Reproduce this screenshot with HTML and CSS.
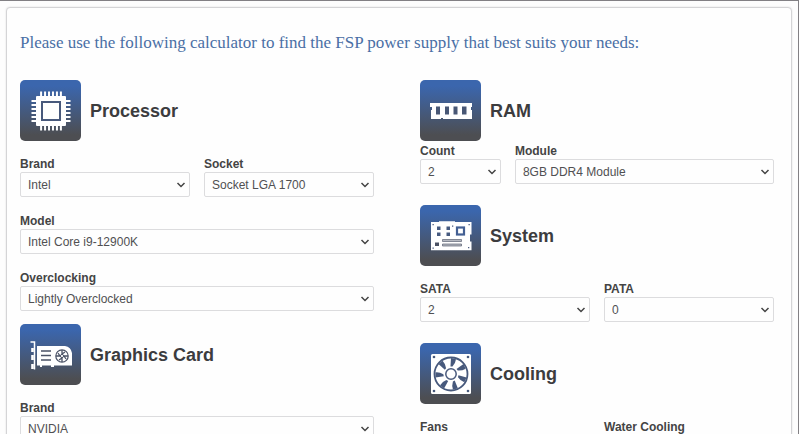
FILE: index.html
```html
<!DOCTYPE html>
<html lang="en">
<head>
    <meta charset="UTF-8">
    <meta name="viewport" content="width=device-width, initial-scale=1.0">
    <title>Power Supply Calculator</title>
    <link rel="stylesheet" href="styles.css">
</head>
<body>
    <!-- Gradient shared by all section icons -->
    <svg class="defs" width="0" height="0" aria-hidden="true">
        <linearGradient id="tile" x1="0" y1="0" x2="0" y2="1">
            <stop offset="0.1" stop-color="#3b66ad"/>
            <stop offset="0.9" stop-color="#4d4e52"/>
        </linearGradient>
    </svg>

    <main class="calculator">
        <p class="intro">Please use the following calculator to find the FSP power supply that best suits your needs:</p>

        <form class="columns">
            <div class="column">
                <section>
                    <div class="section-title">
                        <svg class="icon" viewBox="0 0 61 61" aria-hidden="true">
                            <rect width="61" height="61" rx="5" fill="url(#tile)"/>
                            <path d="M20.100 14h22M20.100 48h22" stroke="#fff" stroke-width="5" stroke-dasharray="2 1.960"/>
                            <path d="M14 20.100v22M48 20.100v22" stroke="#fff" stroke-width="5" stroke-dasharray="2 1.960"/>
                            <rect x="16" y="16" width="30" height="30" rx="1" fill="#fff"/>
                            <rect x="22" y="22" width="18" height="18" fill="#fff" stroke="#48597c" stroke-width="2"/>
                        </svg>
                        <h2>Processor</h2>
                    </div>
                    <div class="fields">
                        <div class="row halves">
                            <div class="field">
                                <label for="cpu-brand">Brand</label>
                                <select id="cpu-brand"><option>Intel</option></select>
                            </div>
                            <div class="field">
                                <label for="cpu-socket">Socket</label>
                                <select id="cpu-socket"><option>Socket LGA 1700</option></select>
                            </div>
                        </div>
                        <div class="field">
                            <label for="cpu-model">Model</label>
                            <select id="cpu-model"><option>Intel Core i9-12900K</option></select>
                        </div>
                        <div class="field">
                            <label for="cpu-overclocking">Overclocking</label>
                            <select id="cpu-overclocking"><option>Lightly Overclocked</option></select>
                        </div>
                    </div>
                </section>

                <section>
                    <div class="section-title">
                        <svg class="icon" viewBox="0 0 61 61" aria-hidden="true">
                            <rect width="61" height="61" rx="5" fill="url(#tile)"/>
                            <path d="M10.500 18h4v27.500" fill="none" stroke="#fff" stroke-width="1.500"/>
                            <path d="M12.500 24v4M12.500 31v5M12.500 40v5" stroke="#fff" stroke-width="2.600"/>
                            <path d="M17 22h28q6 1 7 7v12.500H34v1.500h-3v-1.500h-9v1.500h-2v-1.500h-3z" fill="#fff"/>
                            <path d="M21 27h10M21 31.500h10M21 36h10" stroke="#4a5266" stroke-width="1.600"/>
                            <circle cx="42" cy="32" r="6.200" fill="none" stroke="#4a5266" stroke-width="1.200"/>
                            <path d="M42 26v4l3-2M48 32h-4l2 3M42 38v-4l-3 2M36 32h4l-2-3" fill="none" stroke="#4a5266" stroke-width="1.300"/>
                            <circle cx="42" cy="32" r="1.600" fill="#fff" stroke="#4a5266"/>
                        </svg>
                        <h2>Graphics Card</h2>
                    </div>
                    <div class="fields">
                        <div class="field">
                            <label for="gpu-brand">Brand</label>
                            <select id="gpu-brand"><option>NVIDIA</option></select>
                        </div>
                    </div>
                </section>
            </div>

            <div class="column column-wide">
                <section>
                    <div class="section-title title-tight">
                        <svg class="icon" viewBox="0 0 61 61" aria-hidden="true">
                            <rect width="61" height="61" rx="5" fill="url(#tile)"/>
                            <path d="M10 23h42v4h-1v3h1v9H23v-1h-2v1H11v-9h1v-3h-2z" fill="#fff"/>
                            <path d="M16 26.500h4v8h-4zM25 26.500h4v8h-4zM33.500 26.500h4v8h-4zM42 26.500h4.500v8H42z" fill="#485775"/>
                        </svg>
                        <h2>RAM</h2>
                    </div>
                    <div class="fields">
                        <div class="row count-module">
                            <div class="field">
                                <label for="ram-count">Count</label>
                                <select id="ram-count"><option>2</option></select>
                            </div>
                            <div class="field">
                                <label for="ram-module">Module</label>
                                <select id="ram-module"><option>8GB DDR4 Module</option></select>
                            </div>
                        </div>
                    </div>
                </section>

                <section>
                    <div class="section-title">
                        <svg class="icon" viewBox="0 0 61 61" aria-hidden="true">
                            <rect width="61" height="61" rx="5" fill="url(#tile)"/>
                            <path d="M11 17h8v-.8h16v.8h16.500v12.500H50v7h1.500v8.800H11z" fill="#fff"/>
                            <path d="M17 21.500h3.500V25H17zM26.500 21.500H30V25h-3.500zM17 27.500h3.500V31H17zM26.500 27.500H30V31h-3.500z" fill="#465a80"/>
                            <rect x="37" y="22.500" width="7" height="7" fill="#fff" stroke="#435f93" stroke-width="2.200"/>
                            <path d="M15 37.500h4V41h-4z" fill="#4a5163"/>
                            <path d="M22.500 34.500h19v2h-19zM22.500 39h19v2h-19z" fill="#b5b8c0" stroke="#5b6374" stroke-width=".7"/>
                            <path d="M12.500 19h1.300v1.300h-1.300zM32 20.500h1.300v1.300H32zM48.500 19h1.300v1.300h-1.300zM12.500 42.500h1.300v1.300h-1.300zM48 42h1.300v1.300H48z" fill="#4b5c80"/>
                        </svg>
                        <h2>System</h2>
                    </div>
                    <div class="fields">
                        <div class="row halves">
                            <div class="field">
                                <label for="sata">SATA</label>
                                <select id="sata"><option>2</option></select>
                            </div>
                            <div class="field">
                                <label for="pata">PATA</label>
                                <select id="pata"><option>0</option></select>
                            </div>
                        </div>
                    </div>
                </section>

                <section>
                    <div class="section-title">
                        <svg class="icon" viewBox="0 0 61 61" aria-hidden="true">
                            <rect width="61" height="61" rx="5" fill="url(#tile)"/>
                            <rect x="11" y="11" width="40" height="40" rx="1.500" fill="#fff"/>
                            <circle cx="31" cy="31" r="16.500" fill="none" stroke="#47597c" stroke-width="1.800"/>
                            <g fill="#47597c">
                                <path id="gap" d="M30.500 23.500l.5-8.500 5 1.200q-.5 4-3.500 7.300z"/>
                                <use href="#gap" transform="rotate(51.400 31 31)"/>
                                <use href="#gap" transform="rotate(102.900 31 31)"/>
                                <use href="#gap" transform="rotate(154.300 31 31)"/>
                                <use href="#gap" transform="rotate(205.700 31 31)"/>
                                <use href="#gap" transform="rotate(257.100 31 31)"/>
                                <use href="#gap" transform="rotate(308.600 31 31)"/>
                                <circle cx="14" cy="14" r="1.300"/>
                                <circle cx="48" cy="14" r="1.300"/>
                                <circle cx="14" cy="48" r="1.300"/>
                                <circle cx="48" cy="48" r="1.300"/>
                            </g>
                            <circle cx="31" cy="31" r="5.200" fill="#fff" stroke="#4a5a7c" stroke-width="1.500"/>
                        </svg>
                        <h2>Cooling</h2>
                    </div>
                    <div class="fields">
                        <div class="row halves">
                            <div class="field">
                                <label for="fans">Fans</label>
                                <select id="fans"><option>0</option></select>
                            </div>
                            <div class="field">
                                <label for="water-cooling">Water Cooling</label>
                                <select id="water-cooling"><option>No</option></select>
                            </div>
                        </div>
                    </div>
                </section>
            </div>
        </form>
    </main>
</body>
</html>
```
FILE: styles.css
```css
* {
    box-sizing: border-box;
}
html {
    overflow: hidden;
}
body {
    margin: 0;
    padding: 6px 6px 0;
    font-family: "Liberation Sans", Arial, sans-serif;
    font-size: 12px;
    color: #444;
    background-color: #fdfdfd;
    border-top: 1px solid #828084;
    border-right: 1px solid #828084;
}
.defs {
    display: block;
}
.calculator {
    padding: 24px 17px 20px 13px;
    background: #fefefe;
    border: 1px solid #d4d4d6;
    border-radius: 4px;
    box-shadow: 0 0 2px #ddd;
}
.intro {
    margin: 0 0 26px;
    font-family: "Liberation Serif", "Times New Roman", serif;
    font-size: 17px;
    line-height: 22px;
    color: #4a6fa5;
}
.columns {
    display: grid;
    grid-template-columns: 1fr 1fr;
    gap: 46px;
}
.column {
    display: flex;
    flex-direction: column;
    gap: 13px;
}
.column-wide {
    gap: 21px;
}
.section-title {
    display: flex;
    align-items: center;
    gap: 9px;
    margin-bottom: 15px;
}
.title-tight {
    margin-bottom: 2px;
}
.section-title h2 {
    margin: 0;
    font-size: 18px;
    line-height: 22px;
    color: #3c3c3e;
}
.icon {
    width: 61px;
    height: 61px;
}
.fields {
    display: flex;
    flex-direction: column;
    gap: 16px;
}
.row {
    display: grid;
    gap: 14px;
}
.halves {
    grid-template-columns: 1fr 1fr;
}
.count-module {
    grid-template-columns: 5fr 16fr;
}
.field label {
    display: block;
    font-weight: bold;
    line-height: 16px;
}
.field select {
    display: block;
    width: 100%;
    height: 25px;
    padding: 0 20px 0 7px;
    font: inherit;
    color: #505052;
    appearance: none;
    border: 1px solid #dcdcde;
    border-radius: 2px;
    background: #fefefe url("data:image/svg+xml,%3Csvg xmlns='http://www.w3.org/2000/svg' width='10' height='6' viewBox='0 0 10 6'%3E%3Cpath d='M1.500 1L5 4.500 8.500 1' fill='none' stroke='%23444' stroke-width='1.500'/%3E%3C/svg%3E") no-repeat right 3px center;
}
```
